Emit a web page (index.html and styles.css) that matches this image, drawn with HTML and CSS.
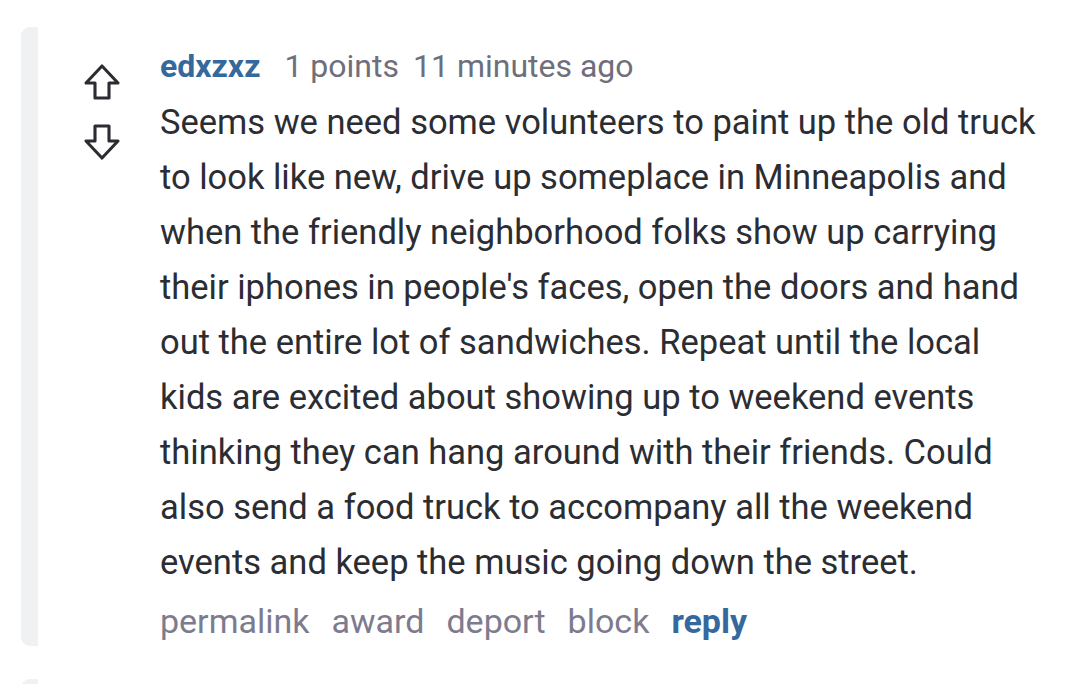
FILE: index.html
```html
<!DOCTYPE html>
<html lang="en">
<head>
<meta charset="utf-8">
<title>Comment</title>
<link rel="stylesheet" href="styles.css">
</head>
<body>
<div class="thread">
  <div class="comment">
    <div class="rail"></div>
    <div class="votes">
      <svg class="arrow" viewBox="0 0 40 40" aria-label="upvote"><path d="M20 3 L4 20 H13 V35 H27 V20 H36 Z" /></svg>
      <svg class="arrow" viewBox="0 0 40 40" aria-label="downvote"><path d="M20 37 L4 20 H13 V5 H27 V20 H36 Z" /></svg>
    </div>
    <div class="content">
      <div class="meta">
        <a class="user" href="#">edxzxz</a>
        <span class="info">1 points</span>
        <span class="info">11 minutes ago</span>
      </div>
      <p class="body">Seems we need some volunteers to paint up the old truck to look like new, drive up someplace in Minneapolis and when the friendly neighborhood folks show up carrying their iphones in people's faces, open the doors and hand out the entire lot of sandwiches. Repeat until the local kids are excited about showing up to weekend events thinking they can hang around with their friends. Could also send a food truck to accompany all the weekend events and keep the music going down the street.</p>
      <div class="actions">
        <a href="#" class="act">permalink</a>
        <a href="#" class="act">award</a>
        <a href="#" class="act">deport</a>
        <a href="#" class="act">block</a>
        <a href="#" class="act reply">reply</a>
      </div>
    </div>
  </div>
  <div class="comment next">
    <div class="rail"></div>
  </div>
</div>
</body>
</html>
```

FILE: styles.css
```css
html, body {
  margin: 0;
  padding: 0;
  background: #ffffff;
}
body {
  font-family: Roboto, "Liberation Sans", Arial, sans-serif;
  color: #2b2d33;
}
.thread {
  padding-top: 27px;
  display: flex;
  flex-direction: column;
  gap: 33px;
}
.comment {
  display: flex;
  align-items: stretch;
  margin-left: 21px;
}
.rail {
  width: 17px;
  flex: none;
  background: #f0f1f3;
  border-radius: 9px 0 0 9px;
}
.next .rail {
  height: 20px;
}
.votes {
  width: 122px;
  flex: none;
  display: flex;
  flex-direction: column;
  align-items: flex-start;
  padding-top: 36px;
  padding-left: 44px;
  box-sizing: border-box;
  gap: 18px;
}
.arrow {
  width: 40px;
  height: 40px;
  fill: none;
  stroke: #2b2d33;
  stroke-width: 3.1;
  stroke-linejoin: round;
}
.content {
  width: 885px;
  padding-top: 18px;
  padding-bottom: 2px;
}
.meta {
  display: flex;
  align-items: baseline;
  gap: 14px;
  font-size: 32px;
  line-height: 42px;
}
.user {
  color: #35699d;
  font-weight: 700;
  text-decoration: none;
  margin-right: 10px;
}
.info {
  color: #6f6e7b;
}
.body {
  margin: 0;
  font-size: 34.5px;
  line-height: 55px;
  padding-top: 8px;
}
.actions {
  display: flex;
  align-items: baseline;
  gap: 22px;
  font-size: 34px;
  line-height: 46px;
  margin-top: 8px;
}
.act {
  color: #7d7b8e;
  text-decoration: none;
}
.act.reply {
  color: #35699d;
  font-weight: 700;
}
```
